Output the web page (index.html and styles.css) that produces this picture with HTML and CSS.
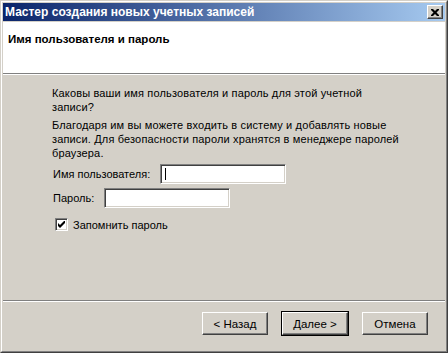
FILE: index.html
```html
<!DOCTYPE html>
<html lang="ru">
<head>
  <meta charset="UTF-8" />
  <title>Мастер создания новых учетных записей</title>
  <link rel="stylesheet" href="styles.css">
</head>
<body>
  <div class="window">
    <div class="frame">
      <div class="titlebar">
        <span class="title">Мастер создания новых учетных записей</span>
        <button class="close">
          <svg width="8" height="7" viewBox="0 0 8 7"><path d="M0 0h2l2 2 2-2h2v1l-2.5 2.5L8 6v1H6L4 5 2 7H0V6l2.5-2.5L0 1z" fill="#000"/></svg>
        </button>
      </div>

      <div class="header">
        <h1>Имя пользователя и пароль</h1>
      </div>
      <div class="sep"></div>

      <div class="content">
        <p>Каковы ваши имя пользователя и пароль для этой учетной записи?</p>
        <p>Благодаря им вы можете входить в систему и добавлять новые записи. Для безопасности пароли хранятся в менеджере паролей браузера.</p>
        <div class="field">
          <label>Имя пользователя:</label>
          <div class="input focus"><span class="caret"></span></div>
        </div>
        <div class="field">
          <label>Пароль:</label>
          <div class="input"></div>
        </div>
        <div class="check">
          <span class="box">
            <svg width="7" height="7" viewBox="0 0 7 7"><path d="M0 2v3l2 2 5-5V-1L2 4z" fill="#000"/></svg>
          </span>
          <span>Запомнить пароль</span>
        </div>
      </div>

      <div class="sep"></div>
      <div class="buttons">
        <button class="btn">&lt; Назад</button>
        <button class="btn default">Далее &gt;</button>
        <button class="btn">Отмена</button>
      </div>
    </div>
  </div>
</body>
</html>
```

FILE: styles.css
```css
* { box-sizing: border-box; }
body {
  margin: 0;
  background: #d4d0c8;
  font-family: "Liberation Sans", Arial, sans-serif;
  font-size: 11px;
  color: #000;
}
.window {
  width: 448px;
  height: 353px;
  border: 1px solid;
  border-color: #d4d0c8 #404040 #404040 #d4d0c8;
}
.frame {
  height: 100%;
  border: 1px solid;
  border-color: #fff #808080 #808080 #fff;
  padding: 1px;
  display: flex;
  flex-direction: column;
}
.titlebar {
  height: 18px;
  background: linear-gradient(to right, #0a246a, #a6caf0);
  display: flex;
  align-items: center;
  justify-content: space-between;
  padding: 0 2px 0 2px;
}
.title {
  color: #fff;
  font-weight: bold;
  font-size: 12px;
}
.close {
  width: 16px;
  height: 14px;
  padding: 0;
  background: #d4d0c8;
  border: 1px solid;
  border-color: #fff #404040 #404040 #fff;
  box-shadow: inset -1px -1px 0 #808080;
  display: flex;
  align-items: center;
  justify-content: center;
}
.header {
  margin-top: 1px;
  height: 51px;
  background: #fff;
  padding: 11px 5px 0;
}
.header h1 {
  margin: 0;
  font-size: 11.5px;
  font-weight: bold;
}
.sep {
  height: 2px;
  border-top: 1px solid #808080;
  border-bottom: 1px solid #fff;
}
.content {
  flex: 1;
  padding: 11px 43px 0 49px;
}
.content p {
  margin: 0 0 4px;
  line-height: 14px;
  letter-spacing: 0.15px;
}
.field {
  display: flex;
  align-items: center;
  gap: 10px;
  margin-top: 4px;
  padding-left: 1px;
}
.input {
  width: 126px;
  height: 20px;
  background: #fff;
  border: 1px solid;
  border-color: #808080 #fff #fff #808080;
  box-shadow: inset 1px 1px 0 #404040, inset -1px -1px 0 #d4d0c8;
  padding: 3px 4px;
}
.caret {
  display: block;
  width: 1px;
  height: 12px;
  background: #000;
}
.check {
  display: flex;
  align-items: center;
  gap: 5px;
  padding-left: 3px;
  margin-top: 10px;
}
.box {
  width: 13px;
  height: 13px;
  background: #fff;
  border: 1px solid;
  border-color: #808080 #fff #fff #808080;
  box-shadow: inset 1px 1px 0 #404040, inset -1px -1px 0 #d4d0c8;
  display: flex;
  align-items: center;
  justify-content: center;
}
.buttons {
  height: 48px;
  display: flex;
  justify-content: flex-end;
  align-items: flex-start;
  gap: 14px;
  padding: 10px 17px 0 0;
}
.btn {
  width: 66px;
  height: 23px;
  padding: 0;
  font-family: inherit;
  font-size: 11.5px;
  color: #000;
  background: #d4d0c8;
  border: 1px solid;
  border-color: #fff #404040 #404040 #fff;
  box-shadow: inset -1px -1px 0 #808080;
}
.btn.default {
  outline: 1px solid #000;
}
```
